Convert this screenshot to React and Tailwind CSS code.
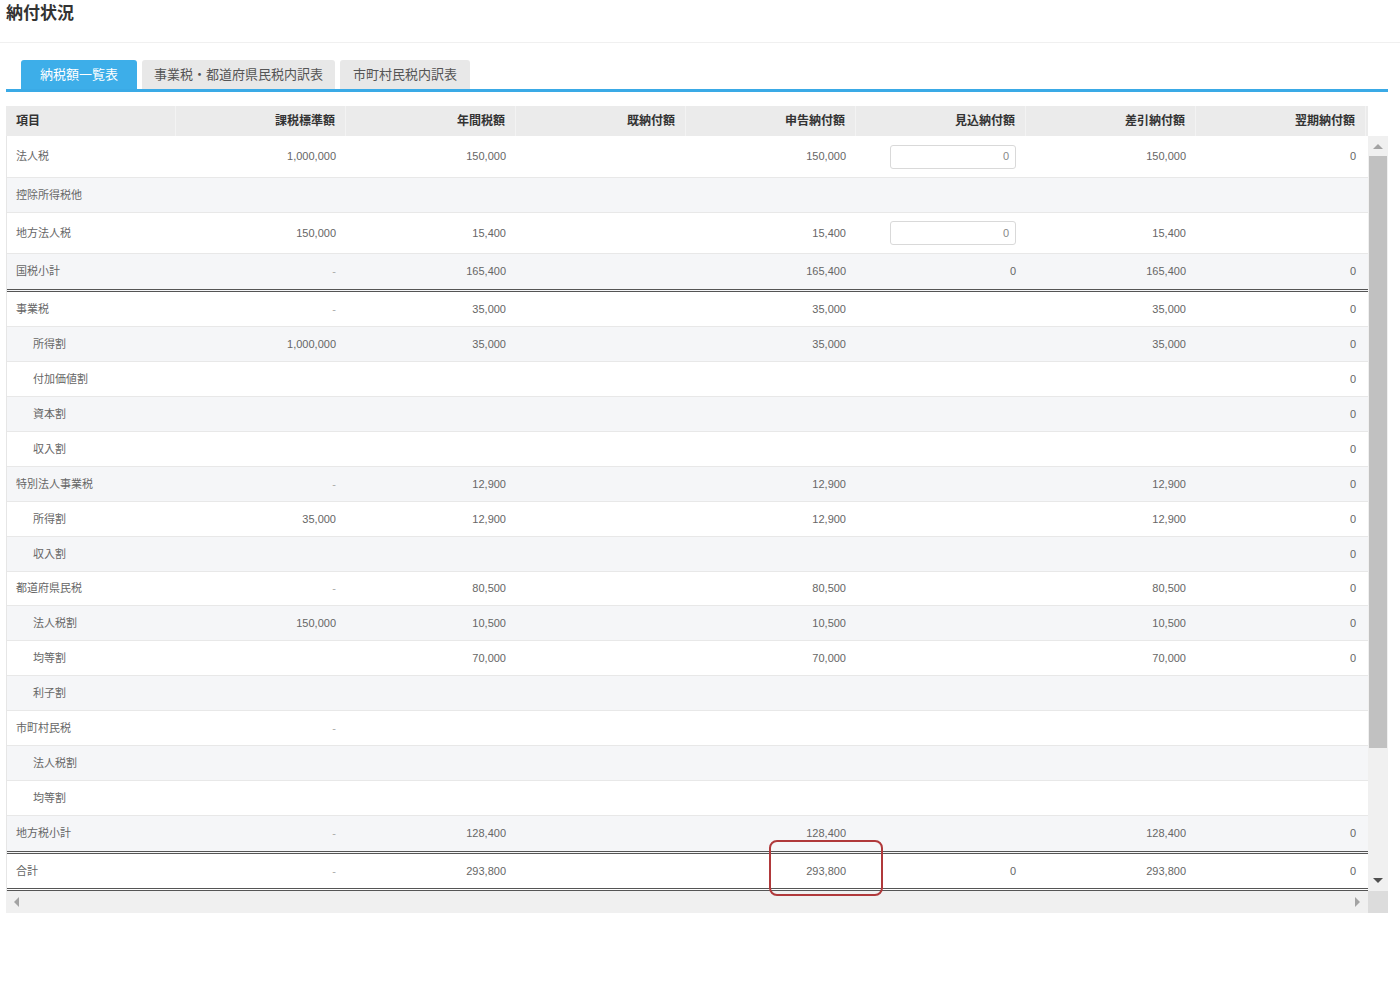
import React from 'react';

const font = { fontFamily: '"Liberation Sans", "Noto Sans CJK JP", sans-serif' };

const headers = ['項目', '課税標準額', '年間税額', '既納付額', '申告納付額', '見込納付額', '差引納付額', '翌期納付額'];

// each row: label, indent, values (7 cols), height, double border below
const rows = [
  { label: '法人税', vals: ['1,000,000', '150,000', '', '150,000', 'input', '150,000', '0'], h: 'h-[42px]' },
  { label: '控除所得税他', vals: ['', '', '', '', '', '', ''] },
  { label: '地方法人税', vals: ['150,000', '15,400', '', '15,400', 'input', '15,400', ''], h: 'h-[41px]' },
  { label: '国税小計', vals: ['-', '165,400', '', '165,400', '0', '165,400', '0'], h: 'h-[38px]', double: true },
  { label: '事業税', vals: ['-', '35,000', '', '35,000', '', '35,000', '0'] },
  { label: '所得割', sub: true, vals: ['1,000,000', '35,000', '', '35,000', '', '35,000', '0'] },
  { label: '付加価値割', sub: true, vals: ['', '', '', '', '', '', '0'] },
  { label: '資本割', sub: true, vals: ['', '', '', '', '', '', '0'] },
  { label: '収入割', sub: true, vals: ['', '', '', '', '', '', '0'] },
  { label: '特別法人事業税', vals: ['-', '12,900', '', '12,900', '', '12,900', '0'] },
  { label: '所得割', sub: true, vals: ['35,000', '12,900', '', '12,900', '', '12,900', '0'] },
  { label: '収入割', sub: true, vals: ['', '', '', '', '', '', '0'] },
  { label: '都道府県民税', vals: ['-', '80,500', '', '80,500', '', '80,500', '0'], h: 'h-[34px]' },
  { label: '法人税割', sub: true, vals: ['150,000', '10,500', '', '10,500', '', '10,500', '0'] },
  { label: '均等割', sub: true, vals: ['', '70,000', '', '70,000', '', '70,000', '0'] },
  { label: '利子割', sub: true, vals: ['', '', '', '', '', '', ''] },
  { label: '市町村民税', vals: ['-', '', '', '', '', '', ''] },
  { label: '法人税割', sub: true, vals: ['', '', '', '', '', '', ''] },
  { label: '均等割', sub: true, vals: ['', '', '', '', '', '', ''] },
  { label: '地方税小計', vals: ['-', '128,400', '', '128,400', '', '128,400', '0'], h: 'h-[38px]', double: true },
  { label: '合計', vals: ['-', '293,800', '', '293,800', '0', '293,800', '0'], h: 'h-[37px]', double: true },
];

const Cell = ({ v }) => {
  if (v === 'input') {
    return (
      <div className="w-[170px] flex items-center justify-end pr-[10px]">
        <div className="w-[126px] h-[24px] border border-[#d9d9d9] rounded-[3px] bg-white flex items-center justify-end pr-[6px] text-[#888]">
          0
        </div>
      </div>
    );
  }
  return (
    <div className={`w-[170px] text-right pr-[10px] ${v === '-' ? 'text-[#aaa]' : 'text-[#666]'}`}>{v}</div>
  );
};

const App = () => {
  return (
    <div className="w-[1400px] h-[1000px] bg-white" style={font}>
      <div className="h-[43px] border-b border-[#f0f0f0] pl-[6px] pt-[4px]">
        <h1 className="text-[17px] font-bold text-[#333] leading-[20px]">納付状況</h1>
      </div>

      <div className="ml-[6px] w-[1382px] mt-[17px] flex items-end gap-[5px] pl-[15px] border-b-[3px] border-[#3aaae6]">
        <div className="w-[116px] h-[29px] rounded-t-[3px] bg-[#3daee9] text-white text-[13px] flex items-center justify-center">納税額一覧表</div>
        <div className="w-[193px] h-[29px] rounded-t-[3px] bg-[#e8e8e8] text-[#555] text-[13px] flex items-center justify-center">事業税・都道府県民税内訳表</div>
        <div className="w-[130px] h-[29px] rounded-t-[3px] bg-[#e8e8e8] text-[#555] text-[13px] flex items-center justify-center">市町村民税内訳表</div>
      </div>

      <div className="relative ml-[6px] w-[1382px] mt-[14px]">
        <div className="flex">
          <div className="w-[1362px]">
            <div className="flex h-[30px] bg-[#ebebeb] items-center text-[12px] font-bold text-[#333]">
              {headers.map((h, i) => (
                <div key={i} className={`w-[170px] h-full flex items-center border-r border-[#f3f3f3] ${i === 0 ? 'pl-[10px]' : 'justify-end pr-[10px]'}`}>
                  {h}
                </div>
              ))}
            </div>
            <div className="border-l border-[#e6e6e6]">
              {rows.map((r, i) => (
                <div
                  key={i}
                  className={`flex items-center text-[11px] ${r.h || 'h-[35px]'} ${i % 2 === 0 ? 'bg-white' : 'bg-[#f5f6f8]'} ${r.double ? 'border-b-[3px] border-double border-[#555]' : 'border-b border-[#e8e8e8]'}`}
                >
                  <div className={`w-[169px] text-[#666] ${r.sub ? 'pl-[26px]' : 'pl-[9px]'}`}>{r.label}</div>
                  {r.vals.map((v, j) => (
                    <Cell key={j} v={v} />
                  ))}
                </div>
              ))}
            </div>
          </div>

          <div className="w-[20px] flex flex-col pt-[30px]">
            <div className="flex-1 bg-[#f0f0f0] flex flex-col items-center">
              <div className="h-[20px] flex items-center justify-center">
                <div className="w-0 h-0 border-l-[5px] border-r-[5px] border-b-[5px] border-l-transparent border-r-transparent border-b-[#a3a3a3]" />
              </div>
              <div className="w-[18px] h-[592px] bg-[#c1c1c1]" />
              <div className="flex-1" />
              <div className="h-[22px] flex items-center justify-center">
                <div className="w-0 h-0 border-l-[5px] border-r-[5px] border-t-[5px] border-l-transparent border-r-transparent border-t-[#505050]" />
              </div>
            </div>
          </div>
        </div>

        <div className="flex h-[22px]">
          <div className="w-[1362px] bg-[#f0f0f0] flex items-center justify-between px-[8px]">
            <div className="w-0 h-0 border-t-[5px] border-b-[5px] border-r-[5px] border-t-transparent border-b-transparent border-r-[#a3a3a3]" />
            <div className="w-0 h-0 border-t-[5px] border-b-[5px] border-l-[5px] border-t-transparent border-b-transparent border-l-[#a3a3a3]" />
          </div>
          <div className="w-[20px] bg-[#dcdcdc]" />
        </div>

        <div className="absolute left-[763px] top-[734px] w-[114px] h-[56px] border-2 border-[#b0393b] rounded-[8px]" />
      </div>
    </div>
  );
};

export default App;
